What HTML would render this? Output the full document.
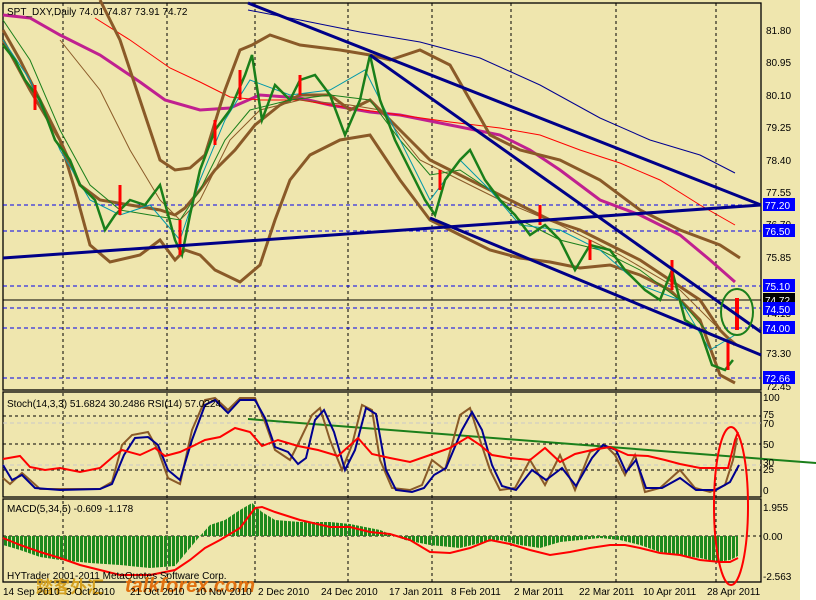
<!DOCTYPE html>
<html><head><meta charset="utf-8"><style>
html,body{margin:0;padding:0;background:#fff;}
svg{display:block;font-family:"Liberation Sans",sans-serif;}
</style></head><body>
<svg width="816" height="600" viewBox="0 0 816 600" xmlns="http://www.w3.org/2000/svg">
<defs>
<pattern id="hb" width="4" height="10" patternUnits="userSpaceOnUse"><rect x="0" y="0" width="3" height="10" fill="#1d8a1d"/></pattern>
</defs>
<rect x="0" y="0" width="800" height="600" fill="#efe6ae"/>
<rect x="800" y="0" width="16" height="600" fill="#ffffff"/>
<g fill="none" stroke="#000" stroke-width="1.3">
<rect x="3" y="3" width="758" height="387"/>
<rect x="3" y="392" width="758" height="105"/>
<rect x="3" y="499" width="758" height="83"/>
</g>
<g stroke="#000" stroke-width="1" stroke-dasharray="3,3">
<line x1="63" y1="3" x2="63" y2="582"/><line x1="167" y1="3" x2="167" y2="582"/>
<line x1="255" y1="3" x2="255" y2="582"/><line x1="348" y1="3" x2="348" y2="582"/>
<line x1="432" y1="3" x2="432" y2="582"/><line x1="511" y1="3" x2="511" y2="582"/>
<line x1="616" y1="3" x2="616" y2="582"/><line x1="716" y1="3" x2="716" y2="582"/>
</g>
<g stroke="#0000ee" stroke-width="1" stroke-dasharray="4,3">
<line x1="3" y1="205" x2="761" y2="205"/><line x1="3" y1="231" x2="761" y2="231"/>
<line x1="3" y1="286" x2="761" y2="286"/><line x1="3" y1="308" x2="761" y2="308"/>
<line x1="3" y1="328" x2="761" y2="328"/><line x1="3" y1="378" x2="761" y2="378"/>
</g>
<line x1="3" y1="300" x2="761" y2="300" stroke="#000" stroke-width="1"/>
<polyline fill="none" stroke="#c02090" stroke-width="3" points="3,15 30,18 60,35 100,55 140,82 165,100 200,110 230,108 260,95 300,98 330,105 370,112 400,115 450,125 500,135 530,150 560,170 600,200 640,215 680,235 710,260 735,282"/>
<polyline fill="none" stroke="#ff0000" stroke-width="1" points="95,18 130,40 170,68 200,82 230,97 260,100 300,100 350,108 400,115 450,122 500,128 540,135 580,150 620,163 660,180 700,205 735,225"/>
<polyline fill="none" stroke="#000090" stroke-width="1" points="248,10 300,20 360,32 420,42 480,58 540,85 600,118 650,140 700,155 735,173"/>
<g fill="none" stroke="#8a5a28" stroke-width="3">
<polyline points="100,0 120,40 140,100 160,160 175,170 190,168 205,155 225,90 240,50 252,45 270,35 300,45 340,50 370,55 390,60 420,50 450,65 470,100 490,135 520,150 560,160 600,180 640,210 680,230 720,245 740,258"/>
<polyline points="3,30 20,60 40,100 60,140 75,190 90,245 110,262 140,255 160,240 175,260 185,250 200,255 215,270 240,282 260,265 275,220 290,180 310,155 340,140 370,135 400,180 430,220 460,235 490,250 520,258 550,262 580,268 610,265 640,275 670,290 700,320 720,375 735,383"/>
<polyline points="3,40 30,90 60,140 80,185 100,200 130,205 160,210 175,215 185,208 200,190 215,170 235,150 255,125 280,105 300,95 330,95 350,110 370,100 400,130 430,160 460,175 490,190 520,205 550,220 580,230 610,245 640,260 670,280 700,300 720,330 735,345"/>
</g>
<polyline fill="none" stroke="#8a5a28" stroke-width="1" points="60,40 100,90 130,150 160,200 180,220 200,200 230,140 260,110 300,100 350,105 380,110 420,160 460,180 500,200 560,225 620,255 680,290 720,330 738,345"/>
<polyline fill="none" stroke="#1b7f1b" stroke-width="1" points="3,20 30,60 60,130 90,185 120,210 150,215 180,220 200,190 225,140 250,110 290,100 330,95 370,100 400,140 430,175 460,170 490,190 520,220 560,240 600,250 640,270 680,300 710,335 735,345"/>
<polyline fill="none" stroke="#0099aa" stroke-width="1" points="3,40 30,80 60,150 90,200 120,215 150,205 180,240 200,180 225,120 250,80 290,95 330,90 365,70 390,120 430,200 460,160 490,190 520,225 560,230 600,250 640,285 680,300 710,350 735,335"/>
<polyline fill="none" stroke="#1a7f1a" stroke-width="2.5" points="3,45 15,60 25,80 40,100 55,140 70,160 80,185 95,200 105,230 115,215 130,200 145,205 160,185 175,240 182,255 190,215 200,170 215,130 230,110 245,75 252,55 262,120 275,85 290,100 300,80 315,75 330,95 345,135 360,100 370,55 380,100 395,140 410,170 425,200 435,215 445,180 460,160 470,150 485,180 500,200 515,215 530,235 545,225 560,240 575,270 590,245 610,250 625,270 645,290 660,300 672,270 685,320 700,330 712,365 725,370 733,360"/>
<g stroke="#ff0000" stroke-width="3">
<line x1="35" y1="85" x2="35" y2="110"/><line x1="120" y1="185" x2="120" y2="215"/><line x1="180" y1="220" x2="180" y2="255"/>
<line x1="215" y1="120" x2="215" y2="145"/><line x1="240" y1="70" x2="240" y2="100"/><line x1="300" y1="75" x2="300" y2="95"/>
<line x1="440" y1="170" x2="440" y2="190"/><line x1="540" y1="205" x2="540" y2="225"/><line x1="590" y1="240" x2="590" y2="260"/>
<line x1="672" y1="260" x2="672" y2="290"/><line x1="728" y1="340" x2="728" y2="370"/>
</g>
<line x1="737" y1="298" x2="737" y2="330" stroke="#ff0000" stroke-width="4"/>
<g stroke="#000088" stroke-width="3" fill="none">
<line x1="248" y1="3" x2="761" y2="205"/>
<line x1="3" y1="258" x2="761" y2="205"/>
<line x1="370" y1="55" x2="761" y2="332"/>
<line x1="430" y1="218" x2="761" y2="355"/>
</g>
<ellipse cx="737" cy="312" rx="16" ry="23" fill="none" stroke="#1b7f1b" stroke-width="2"/>
<g font-size="10" fill="#000">
<text x="766" y="34">81.80</text><text x="766" y="66">80.95</text><text x="766" y="99">80.10</text>
<text x="766" y="131">79.25</text><text x="766" y="164">78.40</text><text x="766" y="196">77.55</text>
<text x="766" y="228">76.70</text><text x="766" y="261">75.85</text><text x="766" y="357">73.30</text>
<text x="766" y="390">72.45</text><text x="766" y="317">74.15</text>
</g>
<g font-size="10">
<rect x="763" y="198" width="32" height="13" fill="#0000ff"/><text x="765" y="209" fill="#fff">77.20</text>
<rect x="763" y="224" width="32" height="13" fill="#0000ff"/><text x="765" y="235" fill="#fff">76.50</text>
<rect x="763" y="279" width="32" height="13" fill="#0000ff"/><text x="765" y="290" fill="#fff">75.10</text>
<rect x="763" y="293" width="32" height="13" fill="#000"/><text x="765" y="304" fill="#fff">74.72</text>
<rect x="763" y="302" width="32" height="13" fill="#0000ff"/><text x="765" y="313" fill="#fff">74.50</text>
<rect x="763" y="321" width="32" height="13" fill="#0000ff"/><text x="765" y="332" fill="#fff">74.00</text>
<rect x="763" y="371" width="32" height="13" fill="#0000ff"/><text x="765" y="382" fill="#fff">72.66</text>
</g>
<text x="7" y="15" font-size="10">SPT_DXY,Daily  74.01 74.87 73.91 74.72</text>
<g stroke="#000" stroke-dasharray="3,3" stroke-width="1">
<line x1="3" y1="416" x2="761" y2="416"/><line x1="3" y1="444" x2="761" y2="444"/><line x1="3" y1="470" x2="761" y2="470"/>
</g>
<g stroke="#c8c8c8" stroke-dasharray="4,3" stroke-width="1">
<line x1="3" y1="423" x2="761" y2="423"/><line x1="3" y1="465" x2="761" y2="465"/>
</g>
<line x1="248" y1="419" x2="816" y2="463" stroke="#1b7f1b" stroke-width="2"/>
<polyline fill="none" stroke="#8a5a28" stroke-width="2" points="3,478 10,484 22,473 30,480 40,489 100,489 112,482 122,445 132,435 148,432 158,450 168,478 180,484 192,430 205,400 215,398 228,410 240,398 255,398 265,422 275,450 290,460 300,440 312,415 320,408 330,440 342,470 352,445 362,405 372,410 380,460 392,488 410,490 422,485 432,460 445,470 460,415 470,408 480,440 490,470 500,490 515,488 530,460 545,485 560,455 575,490 590,452 605,445 615,455 625,475 635,455 645,492 660,488 680,470 695,488 710,492 725,485 733,460 737,438"/>
<polyline fill="none" stroke="#000090" stroke-width="2" points="3,465 12,480 22,475 35,488 60,490 100,489 112,484 124,455 135,438 148,437 158,445 168,470 180,480 192,440 205,405 215,400 228,413 240,400 255,400 265,418 275,447 288,452 298,464 306,458 315,420 324,410 334,432 345,470 355,450 366,408 376,414 386,470 396,490 412,492 424,488 434,475 446,468 462,430 472,412 482,430 492,465 502,486 516,490 532,470 546,480 562,468 576,486 592,458 603,445 616,450 626,472 636,460 646,488 662,488 680,478 696,490 716,490 730,482 739,465"/>
<polyline fill="none" stroke="#ff0000" stroke-width="2" points="3,459 20,456 30,467 45,470 60,468 80,472 100,468 115,455 122,450 140,455 155,448 165,456 180,452 195,445 205,440 220,437 235,428 250,432 262,446 278,440 298,446 318,450 338,456 358,438 372,454 390,458 410,462 430,455 450,448 468,437 480,445 492,455 510,458 530,460 545,448 560,462 575,454 592,450 610,447 628,455 648,456 665,460 680,464 700,468 718,468 728,468 735,440 738,432"/>
<g font-size="10" fill="#000">
<text x="763" y="401">100</text><text x="763" y="418">75</text><text x="763" y="427">70</text><text x="763" y="448">50</text>
<text x="763" y="466">30</text><text x="763" y="473">25</text><text x="763" y="494">0</text>
</g>
<text x="7" y="407" font-size="10">Stoch(14,3,3) 51.6824 30.2486   RSI(14) 57.0224</text>
<line x1="3" y1="536" x2="761" y2="536" stroke="#000" stroke-dasharray="3,3"/>
<polygon fill="url(#hb)" points="3,536 3,545 20,550 40,557 60,560 90,563 120,565 150,568 175,566 190,548 200,536 210,525 225,520 240,510 252,503 262,512 275,520 300,522 330,522 350,524 365,527 380,530 395,536 405,540 430,545 460,548 480,543 500,540 520,545 540,548 560,542 580,540 600,538 620,540 640,545 660,552 680,555 700,558 718,562 730,560 738,556 738,536"/>
<polyline fill="none" stroke="#ff0000" stroke-width="2" points="3,538 20,545 40,552 60,558 80,565 100,570 120,575 150,575 175,570 190,560 205,548 220,540 240,528 255,508 262,507 275,512 300,520 330,527 350,527 370,532 390,534 410,540 430,552 450,553 470,548 490,540 510,544 530,550 550,555 570,552 590,548 610,545 625,545 640,548 660,553 680,555 700,560 720,562 730,562 738,558"/>
<ellipse cx="731" cy="506" rx="17" ry="79" fill="none" stroke="#ff0000" stroke-width="2"/>
<g font-size="10" fill="#000">
<text x="763" y="511">1.955</text><text x="763" y="540">0.00</text><text x="763" y="580">-2.563</text>
</g>
<text x="7" y="512" font-size="10">MACD(5,34,5) -0.609 -1.178</text>
<text x="7" y="579" font-size="10">HYTrader 2001-2011 MetaQuotes Software Corp.</text>
<text x="36" y="593" font-size="17" font-weight="bold" fill="#d4a020" font-family="'Liberation Sans','Noto Sans CJK SC',sans-serif">踏客外汇</text>
<text x="125" y="592" font-size="20" font-weight="bold" font-style="italic" fill="#e07010">talkforex.com</text>
<g font-size="10" fill="#000">
<text x="3" y="595">14 Sep 2010</text><text x="66" y="595">3 Oct 2010</text><text x="130" y="595">21 Oct 2010</text>
<text x="195" y="595">10 Nov 2010</text><text x="258" y="595">2 Dec 2010</text><text x="321" y="595">24 Dec 2010</text>
<text x="389" y="595">17 Jan 2011</text><text x="451" y="595">8 Feb 2011</text><text x="514" y="595">2 Mar 2011</text>
<text x="579" y="595">22 Mar 2011</text><text x="643" y="595">10 Apr 2011</text><text x="707" y="595">28 Apr 2011</text>
</g>
</svg>
</body></html>
